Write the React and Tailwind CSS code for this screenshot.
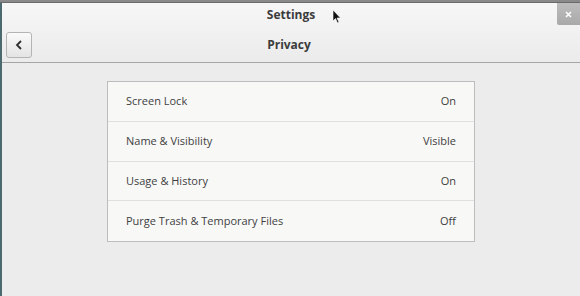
import React from "react";

const rows = [
  ["Screen Lock", "On"],
  ["Name & Visibility", "Visible"],
  ["Usage & History", "On"],
  ["Purge Trash & Temporary Files", "Off"],
];

export default function App() {
  return (
    <div className="relative w-[580px] h-[296px] overflow-hidden bg-[#4a6a70] flex flex-col" style={{ fontFamily: '"Open Sans", "DejaVu Sans", sans-serif' }}>
      <div className="h-[3px] bg-[#8a8a8a] border-b border-[#6a6a6a]" />
      <div className="flex-1 flex ml-[2px] bg-[#ececec] flex-col">
        <div className="relative h-[60px] bg-gradient-to-b from-[#f7f7f7] to-[#ebebeb] border-b border-[#a5a5a5] flex flex-col">
          <div className="h-[24px] flex items-center justify-center text-[12px] font-bold text-[#3c3c3c]">Settings</div>
          <div className="flex items-center h-[30px] px-[4px] mt-[3px]">
            <button className="w-[26px] h-[26px] rounded-[3px] border border-[#b4b4b4] bg-gradient-to-b from-[#fafafa] to-[#e4e4e4] flex items-center justify-center">
              <svg width="10" height="12" viewBox="0 0 10 12"><path d="M7 2 L3 6 L7 10" fill="none" stroke="#2e2e2e" strokeWidth="1.8" /></svg>
            </button>
            <div className="flex-1 text-center text-[12px] font-bold text-[#3c3c3c] pr-[30px]">Privacy</div>
          </div>
          <div className="absolute right-0 top-0 w-[23px] h-[22px] bg-gradient-to-b from-[#bdbdbd] to-[#a9a9a9] rounded-bl-[2px] flex items-center justify-center">
            <svg width="9" height="9" viewBox="0 0 9 9"><path d="M2 2 L7 7 M7 2 L2 7" stroke="#ffffff" strokeWidth="1.6" /></svg>
          </div>
        </div>
        <div className="flex-1 flex justify-center pt-[18px]">
          <div className="w-[368px] h-[161px] border border-[#bdbdbd] bg-[#f8f8f7] flex flex-col">
            {rows.map(([l, r], i) => (
              <div key={l} className={`h-[40px] flex items-center justify-between pl-[18px] pr-[18px] text-[11px] text-[#3f3f3f] ${i < 3 ? "border-b border-[#e0e0e0]" : ""}`}>
                <span>{l}</span>
                <span>{r}</span>
              </div>
            ))}
          </div>
        </div>
      </div>
      <svg className="absolute left-[332px] top-[9px]" width="10" height="15" viewBox="0 0 10 15">
        <path d="M1 1 L1 12 L3.5 9.5 L5.5 14 L7 13.3 L5 9 L8.5 9 Z" fill="#111" stroke="#fff" strokeWidth="0.6" />
      </svg>
    </div>
  );
}
